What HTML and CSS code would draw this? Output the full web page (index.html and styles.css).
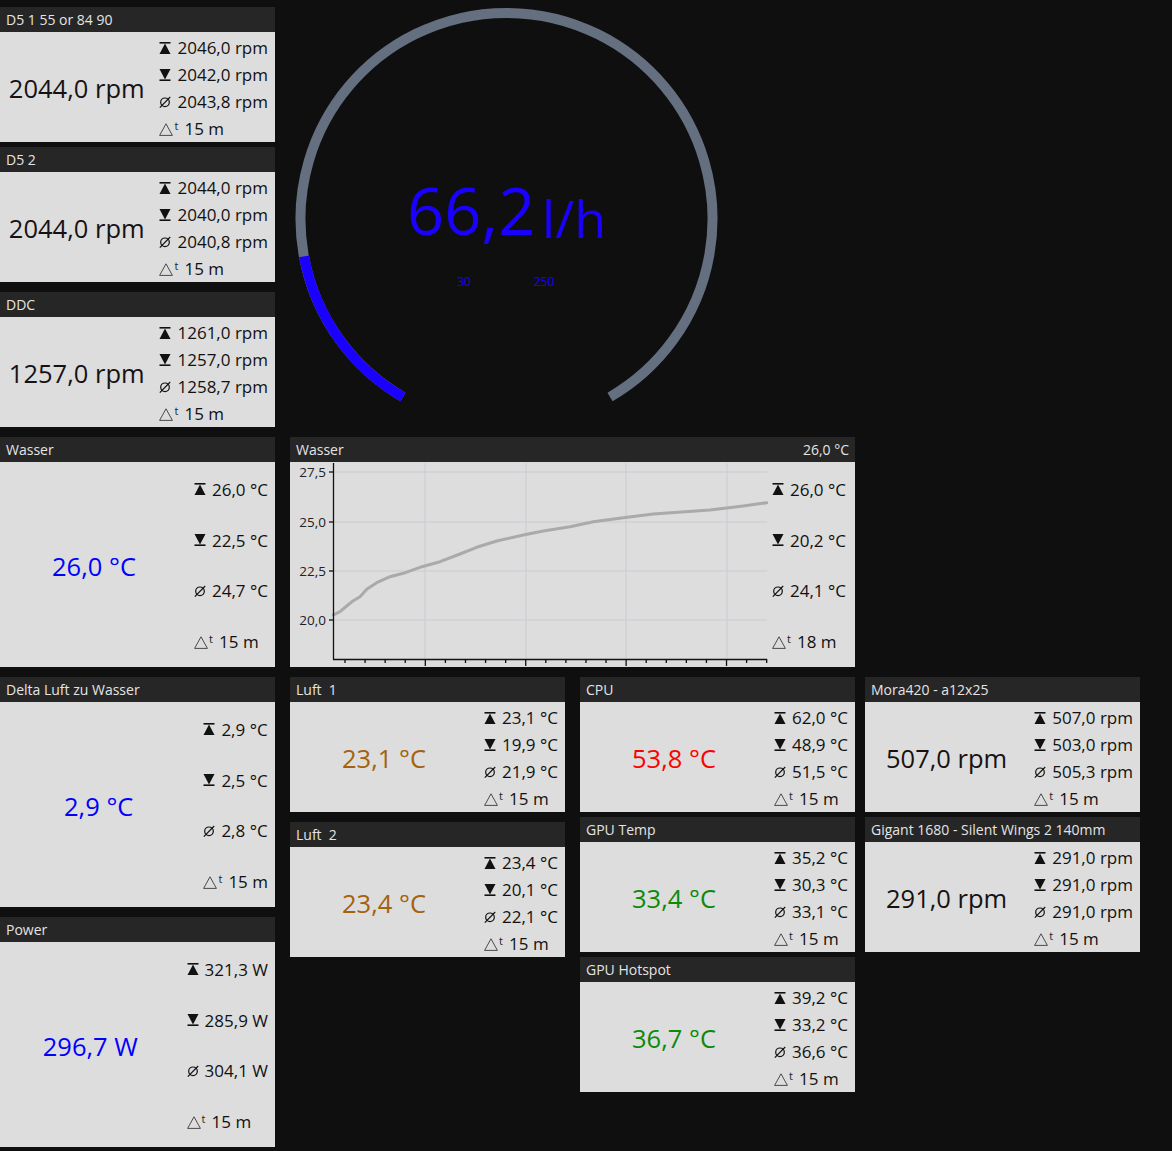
FILE: index.html
```html
<!DOCTYPE html>
<html lang="de">
<head>
    <meta charset="UTF-8">
    <title>Sensor Panel</title>
    <link rel="stylesheet" href="styles.css">
</head>
<body>
    <!-- shared stat icons -->
    <svg class="defs" width="0" height="0">
        <symbol id="i-max" viewBox="0 0 12 12">
            <rect x="0.5" y="0" width="11" height="1.6"/>
            <path d="M6 1.6 L11.5 12 H0.5 Z"/>
        </symbol>
        <symbol id="i-min" viewBox="0 0 12 12">
            <path d="M0.5 0 H11.5 L6 10.4 Z"/>
            <rect x="0.5" y="10.4" width="11" height="1.6"/>
        </symbol>
        <symbol id="i-avg" viewBox="0 0 12 12">
            <circle cx="6" cy="6.3" r="4.3" fill="none" stroke="currentColor" stroke-width="1.2"/>
            <path d="M0.8 11.6 L11.2 1" stroke="currentColor" stroke-width="1.2"/>
        </symbol>
        <symbol id="i-delta" viewBox="0 0 14 13">
            <path d="M7 0.8 L13.4 12.4 H0.6 Z" fill="none" stroke="currentColor" stroke-width="0.9"/>
        </symbol>
    </svg>

    <div class="board">
        <div class="col col-left">
            <section class="tile snug">
                <header class="tile-head">D5 1 55 or 84 90</header>
                <div class="tile-body">
                    <div class="reading">2044,0 rpm</div>
                    <ul class="stats">
                        <li><svg class="ico"><use href="#i-max"/></svg>2046,0 rpm</li>
                        <li><svg class="ico"><use href="#i-min"/></svg>2042,0 rpm</li>
                        <li><svg class="ico"><use href="#i-avg"/></svg>2043,8 rpm</li>
                        <li><span class="dt"><svg><use href="#i-delta"/></svg><sup>t</sup></span>15 m</li>
                    </ul>
                </div>
            </section>
            <section class="tile">
                <header class="tile-head">D5 2</header>
                <div class="tile-body">
                    <div class="reading">2044,0 rpm</div>
                    <ul class="stats">
                        <li><svg class="ico"><use href="#i-max"/></svg>2044,0 rpm</li>
                        <li><svg class="ico"><use href="#i-min"/></svg>2040,0 rpm</li>
                        <li><svg class="ico"><use href="#i-avg"/></svg>2040,8 rpm</li>
                        <li><span class="dt"><svg><use href="#i-delta"/></svg><sup>t</sup></span>15 m</li>
                    </ul>
                </div>
            </section>
            <section class="tile">
                <header class="tile-head">DDC</header>
                <div class="tile-body">
                    <div class="reading">1257,0 rpm</div>
                    <ul class="stats">
                        <li><svg class="ico"><use href="#i-max"/></svg>1261,0 rpm</li>
                        <li><svg class="ico"><use href="#i-min"/></svg>1257,0 rpm</li>
                        <li><svg class="ico"><use href="#i-avg"/></svg>1258,7 rpm</li>
                        <li><span class="dt"><svg><use href="#i-delta"/></svg><sup>t</sup></span>15 m</li>
                    </ul>
                </div>
            </section>
            <section class="tile tall">
                <header class="tile-head">Wasser</header>
                <div class="tile-body">
                    <div class="reading blue">26,0 °C</div>
                    <ul class="stats">
                        <li><svg class="ico"><use href="#i-max"/></svg>26,0 °C</li>
                        <li><svg class="ico"><use href="#i-min"/></svg>22,5 °C</li>
                        <li><svg class="ico"><use href="#i-avg"/></svg>24,7 °C</li>
                        <li><span class="dt"><svg><use href="#i-delta"/></svg><sup>t</sup></span>15 m</li>
                    </ul>
                </div>
            </section>
            <section class="tile tall">
                <header class="tile-head">Delta Luft zu Wasser</header>
                <div class="tile-body">
                    <div class="reading blue">2,9 °C</div>
                    <ul class="stats">
                        <li><svg class="ico"><use href="#i-max"/></svg>2,9 °C</li>
                        <li><svg class="ico"><use href="#i-min"/></svg>2,5 °C</li>
                        <li><svg class="ico"><use href="#i-avg"/></svg>2,8 °C</li>
                        <li><span class="dt"><svg><use href="#i-delta"/></svg><sup>t</sup></span>15 m</li>
                    </ul>
                </div>
            </section>
            <section class="tile tall">
                <header class="tile-head">Power</header>
                <div class="tile-body">
                    <div class="reading blue">296,7 W</div>
                    <ul class="stats">
                        <li><svg class="ico"><use href="#i-max"/></svg>321,3 W</li>
                        <li><svg class="ico"><use href="#i-min"/></svg>285,9 W</li>
                        <li><svg class="ico"><use href="#i-avg"/></svg>304,1 W</li>
                        <li><span class="dt"><svg><use href="#i-delta"/></svg><sup>t</sup></span>15 m</li>
                    </ul>
                </div>
            </section>
        </div>

        <div class="main">
            <!-- flow gauge, range 30..250 l/h over a 300 degree arc -->
            <div class="gauge">
                <svg width="440" height="430" viewBox="0 0 440 430">
                    <path class="gauge-track" d="M113 390 A206 206 0 1 1 320 390"/>
                    <path class="gauge-fill" d="M113 390 A206 206 0 0 1 14 249.4"/>
                    <text class="gauge-value" x="117" y="228">66,2</text>
                    <text class="gauge-unit" x="252" y="231">l/h</text>
                    <text class="gauge-scale" x="174" y="279" text-anchor="middle">30</text>
                    <text class="gauge-scale" x="254" y="279" text-anchor="middle">250</text>
                </svg>
            </div>

            <section class="tile tall wide">
                <header class="tile-head">
                    <span>Wasser</span>
                    <span>26,0 °C</span>
                </header>
                <div class="tile-body">
                    <svg class="chart" width="480" height="205" viewBox="0 0 480 205">
                        <g class="grid">
                            <line x1="43" y1="10" x2="477" y2="10"/>
                            <line x1="43" y1="60" x2="477" y2="60"/>
                            <line x1="43" y1="109" x2="477" y2="109"/>
                            <line x1="43" y1="158" x2="477" y2="158"/>
                            <line x1="135" y1="1" x2="135" y2="197"/>
                            <line x1="236" y1="1" x2="236" y2="197"/>
                            <line x1="336" y1="1" x2="336" y2="197"/>
                            <line x1="437" y1="1" x2="437" y2="197"/>
                        </g>
                        <g class="labels">
                            <text x="36" y="14.5">27,5</text>
                            <text x="36" y="64.5">25,0</text>
                            <text x="36" y="113.5">22,5</text>
                            <text x="36" y="162.5">20,0</text>
                        </g>
                        <polyline class="trend" points="43.3,153 50,149.7 56.7,144 63.3,138.7 70,134.7 76.7,127.3 86.7,120.7 100,114.7 113.3,111.3 130,105.3 150,99.7 170,92 186.7,85.3 206.7,79 233.3,73 253.3,69 280,64.7 303.3,59.7 333.3,55.7 363.3,52 420,48 453.3,44 476.7,40.7"/>
                        <g class="axis" id="axis">
                            <line x1="43.5" y1="1" x2="43.5" y2="197.5"/>
                            <line x1="43" y1="197.5" x2="477" y2="197.5"/>
                            <line x1="39" y1="10" x2="43" y2="10"/>
                            <line x1="39" y1="60" x2="43" y2="60"/>
                            <line x1="39" y1="109" x2="43" y2="109"/>
                            <line x1="39" y1="158" x2="43" y2="158"/>
                        </g>
                    </svg>
                    <ul class="stats">
                        <li><svg class="ico"><use href="#i-max"/></svg>26,0 °C</li>
                        <li><svg class="ico"><use href="#i-min"/></svg>20,2 °C</li>
                        <li><svg class="ico"><use href="#i-avg"/></svg>24,1 °C</li>
                        <li><span class="dt"><svg><use href="#i-delta"/></svg><sup>t</sup></span>18 m</li>
                    </ul>
                </div>
            </section>

            <div class="lower">
                <div class="col col-loose">
                    <section class="tile">
                        <header class="tile-head">Luft&nbsp; 1</header>
                        <div class="tile-body">
                            <div class="reading amber">23,1 °C</div>
                            <ul class="stats">
                                <li><svg class="ico"><use href="#i-max"/></svg>23,1 °C</li>
                                <li><svg class="ico"><use href="#i-min"/></svg>19,9 °C</li>
                                <li><svg class="ico"><use href="#i-avg"/></svg>21,9 °C</li>
                                <li><span class="dt"><svg><use href="#i-delta"/></svg><sup>t</sup></span>15 m</li>
                            </ul>
                        </div>
                    </section>
                    <section class="tile">
                        <header class="tile-head">Luft&nbsp; 2</header>
                        <div class="tile-body">
                            <div class="reading amber">23,4 °C</div>
                            <ul class="stats">
                                <li><svg class="ico"><use href="#i-max"/></svg>23,4 °C</li>
                                <li><svg class="ico"><use href="#i-min"/></svg>20,1 °C</li>
                                <li><svg class="ico"><use href="#i-avg"/></svg>22,1 °C</li>
                                <li><span class="dt"><svg><use href="#i-delta"/></svg><sup>t</sup></span>15 m</li>
                            </ul>
                        </div>
                    </section>
                </div>

                <div class="col">
                    <section class="tile">
                        <header class="tile-head">CPU</header>
                        <div class="tile-body">
                            <div class="reading red">53,8 °C</div>
                            <ul class="stats">
                                <li><svg class="ico"><use href="#i-max"/></svg>62,0 °C</li>
                                <li><svg class="ico"><use href="#i-min"/></svg>48,9 °C</li>
                                <li><svg class="ico"><use href="#i-avg"/></svg>51,5 °C</li>
                                <li><span class="dt"><svg><use href="#i-delta"/></svg><sup>t</sup></span>15 m</li>
                            </ul>
                        </div>
                    </section>
                    <section class="tile">
                        <header class="tile-head">GPU Temp</header>
                        <div class="tile-body">
                            <div class="reading green">33,4 °C</div>
                            <ul class="stats">
                                <li><svg class="ico"><use href="#i-max"/></svg>35,2 °C</li>
                                <li><svg class="ico"><use href="#i-min"/></svg>30,3 °C</li>
                                <li><svg class="ico"><use href="#i-avg"/></svg>33,1 °C</li>
                                <li><span class="dt"><svg><use href="#i-delta"/></svg><sup>t</sup></span>15 m</li>
                            </ul>
                        </div>
                    </section>
                    <section class="tile">
                        <header class="tile-head">GPU Hotspot</header>
                        <div class="tile-body">
                            <div class="reading green">36,7 °C</div>
                            <ul class="stats">
                                <li><svg class="ico"><use href="#i-max"/></svg>39,2 °C</li>
                                <li><svg class="ico"><use href="#i-min"/></svg>33,2 °C</li>
                                <li><svg class="ico"><use href="#i-avg"/></svg>36,6 °C</li>
                                <li><span class="dt"><svg><use href="#i-delta"/></svg><sup>t</sup></span>15 m</li>
                            </ul>
                        </div>
                    </section>
                </div>

                <div class="col">
                    <section class="tile">
                        <header class="tile-head">Mora420 - a12x25</header>
                        <div class="tile-body">
                            <div class="reading">507,0 rpm</div>
                            <ul class="stats">
                                <li><svg class="ico"><use href="#i-max"/></svg>507,0 rpm</li>
                                <li><svg class="ico"><use href="#i-min"/></svg>503,0 rpm</li>
                                <li><svg class="ico"><use href="#i-avg"/></svg>505,3 rpm</li>
                                <li><span class="dt"><svg><use href="#i-delta"/></svg><sup>t</sup></span>15 m</li>
                            </ul>
                        </div>
                    </section>
                    <section class="tile">
                        <header class="tile-head">Gigant 1680 - Silent Wings 2 140mm</header>
                        <div class="tile-body">
                            <div class="reading">291,0 rpm</div>
                            <ul class="stats">
                                <li><svg class="ico"><use href="#i-max"/></svg>291,0 rpm</li>
                                <li><svg class="ico"><use href="#i-min"/></svg>291,0 rpm</li>
                                <li><svg class="ico"><use href="#i-avg"/></svg>291,0 rpm</li>
                                <li><span class="dt"><svg><use href="#i-delta"/></svg><sup>t</sup></span>15 m</li>
                            </ul>
                        </div>
                    </section>
                </div>
            </div>
        </div>
    </div>

    <script>
        // minor ticks every 20px along the time axis, a longer one every fifth
        var axis = document.getElementById('axis');
        for (var k = 0; k < 22; k++) {
            var x = 55 + k * 20.08;
            var major = (k % 5) === 4;
            var tick = document.createElementNS('http://www.w3.org/2000/svg', 'line');
            tick.setAttribute('x1', x);
            tick.setAttribute('x2', x);
            tick.setAttribute('y1', 197);
            tick.setAttribute('y2', major ? 204 : 201);
            axis.appendChild(tick);
        }
    </script>
</body>
</html>
```

FILE: styles.css
```css
body {
    margin: 0;
    background-color: #0f0f0f;
    font-family: "Open Sans", "Noto Sans", sans-serif;
    color: #111;
}
.defs {
    position: absolute;
}
.board {
    display: flex;
    padding-top: 7px;
}
.col {
    display: flex;
    flex-direction: column;
    gap: 5px;
}
.col-left, .col-loose {
    gap: 10px;
}
.tile.snug {
    margin-bottom: -5px;
}
.main {
    margin-left: 15px;
    width: 850px;
}
.gauge {
    height: 430px;
}
.gauge svg {
    display: block;
}
.gauge-track, .gauge-fill {
    fill: none;
    stroke-width: 10;
}
.gauge-track {
    stroke: #646f7f;
}
.gauge-fill {
    stroke: #1a00ff;
}
.gauge-value {
    font-size: 65px;
    fill: #1a00ff;
}
.gauge-unit {
    font-size: 52px;
    fill: #1a00ff;
}
.gauge-scale {
    font-size: 12px;
    fill: #1a00ff;
}
.lower {
    display: flex;
    gap: 15px;
    margin-top: 10px;
}
.lower .col:last-child {
    margin-left: -5px;
}

/* tiles */
.tile {
    width: 275px;
}
.tile.wide {
    width: 565px;
}
.tile-head {
    height: 25px;
    background-color: #262626;
    color: #e4e4e4;
    font-size: 14px;
    line-height: 25px;
    padding: 0 6px;
    display: flex;
    justify-content: space-between;
    white-space: nowrap;
    overflow: hidden;
}
.tile-body {
    height: 110px;
    background-color: #dddddd;
    display: flex;
    align-items: stretch;
}
.tile.tall .tile-body {
    height: 205px;
}
.reading {
    flex: 1;
    display: flex;
    align-items: center;
    justify-content: center;
    font-size: 25.5px;
    color: #161212;
    padding: 2px 6px 0 0;
    white-space: nowrap;
}
.reading.blue { color: #0000ff; }
.reading.amber { color: #a3620b; }
.reading.red { color: #ff0000; }
.reading.green { color: #0b8a0b; }

.stats {
    list-style: none;
    margin: 0;
    padding: 2px 7px 0 0;
    display: grid;
    grid-template-rows: repeat(4, 1fr);
    align-items: center;
    font-size: 17px;
    white-space: nowrap;
}
.stats li {
    display: flex;
    align-items: center;
}
.ico {
    width: 12px;
    height: 12px;
    margin-right: 6px;
    fill: #111;
    color: #111;
}
.dt {
    display: flex;
    align-items: flex-start;
    color: #3a3a3a;
    margin-right: 6px;
    width: 19px;
    height: 15px;
}
.dt svg {
    width: 14px;
    height: 13px;
    margin-top: 2px;
}
.dt sup {
    font-size: 11px;
    line-height: 11px;
    color: #222;
    margin: -1px 0 0 1px;
}

/* trend chart */
.chart {
    display: block;
    flex: none;
    margin-right: 2px;
}
.chart .grid line {
    stroke: #cbcbd3;
    stroke-width: 1;
}
.chart .axis line {
    stroke: #111;
    stroke-width: 1.3;
}
.chart .labels text {
    font-size: 13.5px;
    fill: #222;
    text-anchor: end;
}
.trend {
    fill: none;
    stroke: #aaaaaa;
    stroke-width: 3;
    stroke-linejoin: round;
    stroke-linecap: round;
}
```
